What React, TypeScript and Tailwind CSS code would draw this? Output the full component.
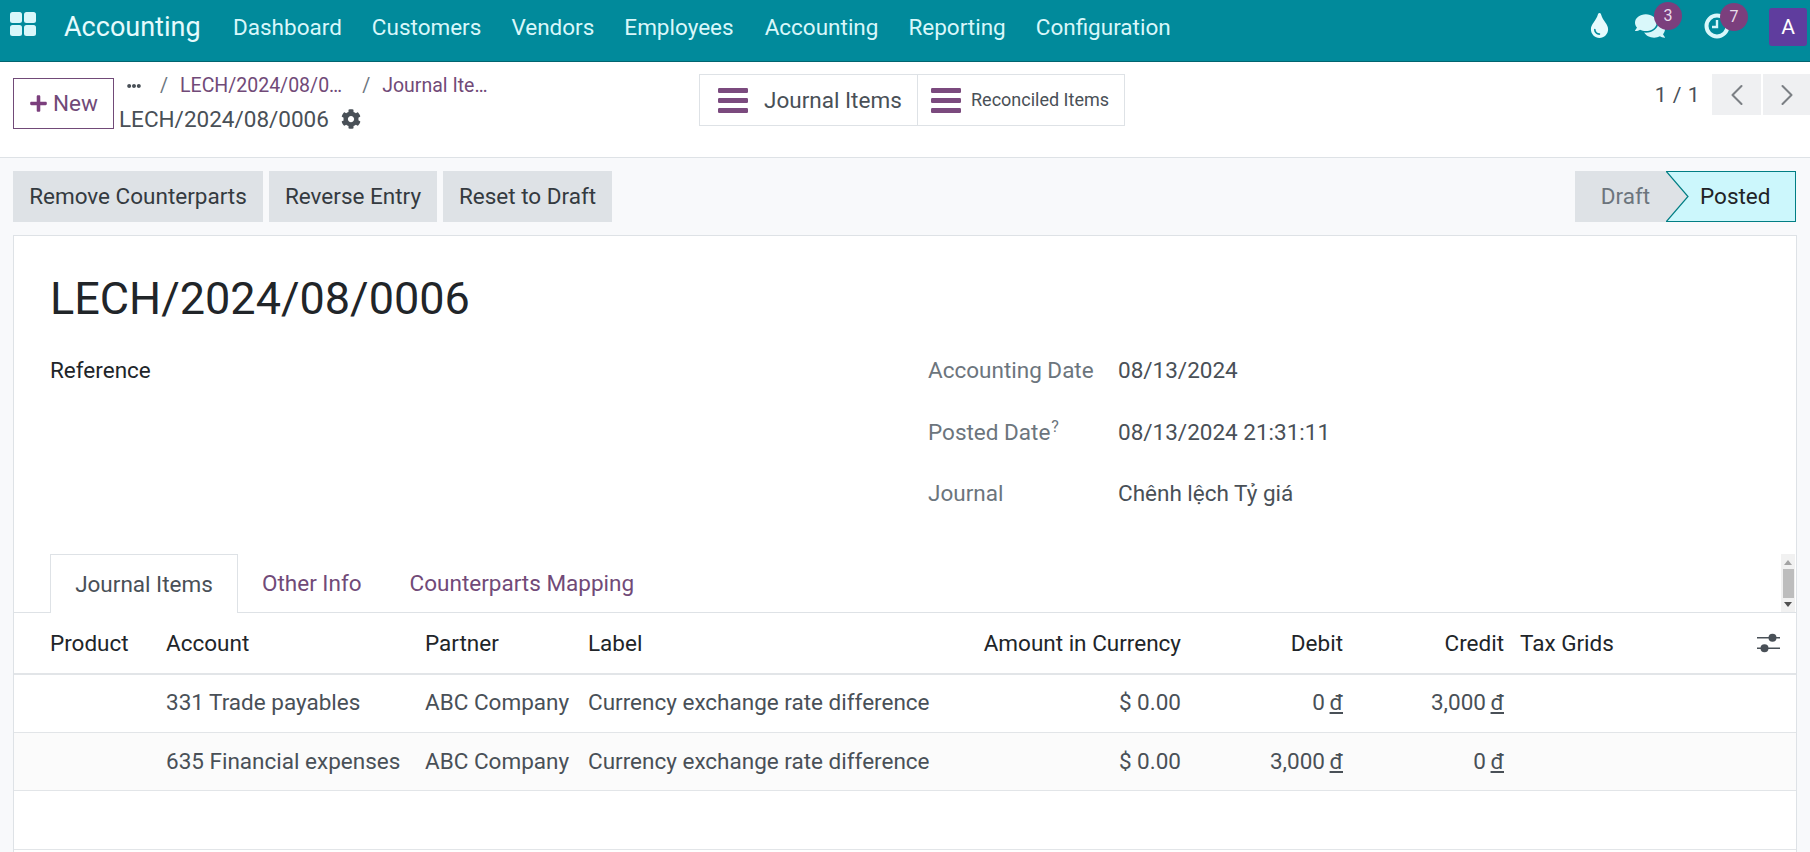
import { FaCog, FaComments, FaEllipsisH, FaPlus, FaTint } from "react-icons/fa";
import { FiChevronLeft, FiChevronRight } from "react-icons/fi";

const NAV = [
  { label: "Dashboard", ml: "ml-0" },
  { label: "Customers", ml: "ml-[30px]" },
  { label: "Vendors", ml: "ml-[30px]" },
  { label: "Employees", ml: "ml-[30px]" },
  { label: "Accounting", ml: "ml-[31px]" },
  { label: "Reporting", ml: "ml-[30px]" },
  { label: "Configuration", ml: "ml-[30px]" },
];

const ROWS = [
  { account: "331 Trade payables", debit: "0", credit: "3,000", bg: "bg-white pb-[3px]" },
  { account: "635 Financial expenses", debit: "3,000", credit: "0", bg: "bg-[#fbfbfb] pb-[2px]" },
];

const GRID = "grid grid-cols-[152px_259px_163px_353px_240px_162px_161px_1fr] items-center";

const AppsIcon = () => (
  <svg width="26" height="24" viewBox="0 0 26 24" fill="#d9f7fa">
    <rect x="0" y="0" width="12" height="11" rx="2.5" />
    <rect x="14" y="0" width="12" height="11" rx="2.5" />
    <rect x="0" y="13" width="12" height="11" rx="2.5" />
    <rect x="14" y="13" width="12" height="11" rx="2.5" />
  </svg>
);

const ClockIcon = () => (
  <svg width="28" height="28" viewBox="0 0 28 28" fill="none" stroke="#d9f7fa">
    <circle cx="14" cy="14" r="10.5" strokeWidth="4" />
    <path d="M14 8v7h-5" strokeWidth="2.4" />
  </svg>
);

const SlidersIcon = () => (
  <svg width="23" height="20" viewBox="0 0 23 20" fill="#495057">
    <rect x="0" y="4" width="23" height="1.5" />
    <rect x="0" y="14.5" width="23" height="1.5" />
    <circle cx="15.5" cy="4.7" r="4" />
    <circle cx="7.5" cy="15.2" r="4" />
  </svg>
);

const BarsIcon = () => (
  <svg width="30" height="25" viewBox="0 0 30 25" fill="#7b4a7e">
    <rect x="0" y="0" width="30" height="5" rx="1.2" />
    <rect x="0" y="10" width="30" height="5" rx="1.2" />
    <rect x="0" y="20" width="30" height="5" rx="1.2" />
  </svg>
);

const Badge = ({ n, right }: { n: string; right: string }) => (
  <span className={`absolute -top-[9px] ${right} flex h-[28px] w-[28px] items-center justify-center rounded-full bg-[#7b3f7d] text-[16px] text-[#e8dcea]`}>
    {n}
  </span>
);

const Field = ({ label, value, sup, mt }: { label: string; value: string; sup?: boolean; mt: string }) => (
  <div className={`flex h-[24px] items-center ${mt}`}>
    <div className="w-[190px] text-[#6c757d]">
      {label}
      {sup && <sup className="ml-px text-[16px] text-[#6c757d]">?</sup>}
    </div>
    <div className="text-[#495057]">{value}</div>
  </div>
);

export default function App() {
  return (
    <div className="h-[852px] w-[1810px] overflow-hidden bg-[#f8f9fb] font-['Roboto',sans-serif] text-[22.5px] leading-[24px] text-[#495057]">
      <header className="flex h-[62px] items-center border-b border-[#01646f] bg-[#018a9b] pb-[8px] text-[#d9f7fa]">
        <div className="mb-[5px] ml-[10px] w-[54px]">
          <AppsIcon />
        </div>
        <span className="w-[169px] text-[27px] text-[#e6fbfd]">Accounting</span>
        {NAV.map((n) => (
          <span key={n.label} className={n.ml}>
            {n.label}
          </span>
        ))}
        <div className="ml-auto flex items-center">
          <FaTint className="mb-[2px] mr-[25px] h-[25px] w-[19px] text-[#e6fbfd]" />
          <div className="relative mb-[2px] mr-[38px] ml-[1px]">
            <FaComments className="h-[30px] w-[30px] text-[#d9f7fa]" />
            <Badge n="3" right="-right-[17px]" />
          </div>
          <div className="relative mb-[2px] mr-[38px]">
            <ClockIcon />
            <Badge n="7" right="-right-[17px]" />
          </div>
          <div className="mr-[3px] flex h-[38px] w-[38px] items-center justify-center rounded-[3px] bg-[#5f3d9e] text-[21px] text-white">
            A
          </div>
        </div>
      </header>

      <div className="flex h-[96px] border-b border-[#dee2e6] bg-white">
        <div className="flex w-[684px] shrink-0">
          <button className="ml-[13px] mt-[16px] flex h-[51px] w-[101px] items-center justify-center gap-[5px] border border-[#714a78] pb-[1px] text-[#714a78]">
            <FaPlus className="h-[19px] w-[19px] text-[#7b3f7d]" />
            <span>New</span>
          </button>
          <div className="ml-[5px] mt-[12px]">
            <div className="flex h-[24px] items-center text-[19.5px]">
              <FaEllipsisH className="ml-[7px] h-[14px] w-[16px] text-[#495057]" />
              <span className="ml-[18px] text-[#6c757d]">/</span>
              <span className="ml-[12px] text-[#714a78]">LECH/2024/08/0…</span>
              <span className="ml-[20px] text-[#6c757d]">/</span>
              <span className="ml-[12px] text-[#714a78]">Journal Ite…</span>
            </div>
            <div className="mt-[9px] flex items-center">
              LECH/2024/08/0006
              <FaCog className="ml-[12px] h-[20px] w-[20px] text-[#495057]" />
            </div>
          </div>
        </div>
        <div className="ml-[15px] mt-[12px] flex h-[52px] w-[426px] border border-[#dee2e6]">
          <div className="flex w-[218px] items-center border-r border-[#dee2e6] pl-[18px]">
            <BarsIcon />
            <span className="ml-[16px]">Journal Items</span>
          </div>
          <div className="flex items-center pl-[13px]">
            <BarsIcon />
            <span className="ml-[10px] text-[18px]">Reconciled Items</span>
          </div>
        </div>
        <div className="ml-auto mt-[12px] flex h-[41px] items-center">
          <span className="mr-[12px] text-[21px] tracking-[0.5px]">1 / 1</span>
          <div className="flex h-[41px] w-[49px] items-center justify-center bg-[#eff0f2] text-[#7b7f84]">
            <FiChevronLeft className="h-[36px] w-[36px]" strokeWidth={1.4} />
          </div>
          <div className="ml-[2px] flex h-[41px] w-[47px] items-center justify-center bg-[#eff0f2] text-[#7b7f84]">
            <FiChevronRight className="h-[36px] w-[36px]" strokeWidth={1.4} />
          </div>
        </div>
      </div>

      <div className="flex h-[77px] items-start pl-[13px] pr-[14px] pt-[13px]">
        <button className="flex h-[51px] w-[250px] items-center justify-center bg-[#dee2e6] pb-[1px] text-[#343a40]">Remove Counterparts</button>
        <button className="ml-[6px] flex h-[51px] w-[168px] items-center justify-center bg-[#dee2e6] pb-[1px] text-[#343a40]">Reverse Entry</button>
        <button className="ml-[6px] flex h-[51px] w-[169px] items-center justify-center bg-[#dee2e6] pb-[1px] text-[#343a40]">Reset to Draft</button>
        <div className="ml-auto flex h-[51px]">
          <div className="flex w-[91px] items-center justify-center bg-[#dee2e6] pb-[1px] pl-[10px] text-[#6c757d]">Draft</div>
          <svg width="23" height="51" viewBox="0 0 23 51">
            <rect width="23" height="51" fill="#ccf7fc" />
            <polygon points="0,0 22,25.5 0,51" fill="#dee2e6" />
            <path d="M0 .5h23M0 0L22 25.5L0 51M0 50.5h23" fill="none" stroke="#017e84" strokeWidth="1.2" />
          </svg>
          <div className="flex w-[107px] items-center border-y border-r border-[#017e84] bg-[#ccf7fc] pb-[1px] pl-[11px] text-[#1f2327]">Posted</div>
        </div>
      </div>

      <main className="mx-[13px] h-[700px] border border-[#dee2e6] bg-white">
        <h1 className="ml-[36px] mt-[36px] h-[53px] text-[45px] leading-[53px] text-[#212529]">LECH/2024/08/0006</h1>
        <div className="mt-[33px] flex h-[196px]">
          <div className="ml-[36px] w-[878px] text-[#212529]">Reference</div>
          <div>
            <Field label="Accounting Date" value="08/13/2024" mt="mt-0" />
            <Field label="Posted Date" value="08/13/2024 21:31:11" sup mt="mt-[38px]" />
            <Field label="Journal" value="Chênh lệch Tỷ giá" mt="mt-[37px]" />
          </div>
        </div>

        <div className="relative flex h-[59px] border-b border-[#dee2e6]">
          <div className="ml-[36px] flex h-[59px] w-[188px] items-center justify-center border-x border-t border-[#dee2e6] bg-white">Journal Items</div>
          <span className="ml-[24px] mt-[17px] text-[#714a78]">Other Info</span>
          <span className="ml-[48px] mt-[17px] text-[#714a78]">Counterparts Mapping</span>
          <div className="absolute right-[1px] top-0 flex h-[58px] w-[14px] flex-col items-center bg-[#f1f1f1]">
            <span className="mt-[6px] h-0 w-0 border-x-[4px] border-b-[5px] border-x-transparent border-b-[#a3a3a3]" />
            <span className="mt-[4px] h-[29px] w-[11px] bg-[#bdbdbd]" />
            <span className="mt-[4px] h-0 w-0 border-x-[4px] border-t-[5px] border-x-transparent border-t-[#505050]" />
          </div>
        </div>

        <div className={`${GRID} h-[62px] border-b-2 border-[#e2e5e8] pb-[1px] text-[#212529]`}>
          <div className="pl-[36px]">Product</div>
          <div>Account</div>
          <div>Partner</div>
          <div>Label</div>
          <div className="text-right">Amount in Currency</div>
          <div className="text-right">Debit</div>
          <div className="text-right">Credit</div>
          <div className="flex items-center justify-between pl-[16px] pr-[16px]">
            Tax Grids
            <SlidersIcon />
          </div>
        </div>

        {ROWS.map((r) => (
          <div key={r.account} className={`${GRID} h-[58px] border-b border-[#e2e5e8] ${r.bg}`}>
            <div />
            <div>{r.account}</div>
            <div>ABC Company</div>
            <div className="whitespace-nowrap">Currency exchange rate difference</div>
            <div className="text-right">$ 0.00</div>
            <div className="text-right">
              {r.debit} <u className="-ml-px">đ</u>
            </div>
            <div className="text-right">
              {r.credit} <u className="-ml-px">đ</u>
            </div>
            <div />
          </div>
        ))}
        <div className="h-[59px] border-b border-[#e2e5e8]" />
      </main>
    </div>
  );
}
